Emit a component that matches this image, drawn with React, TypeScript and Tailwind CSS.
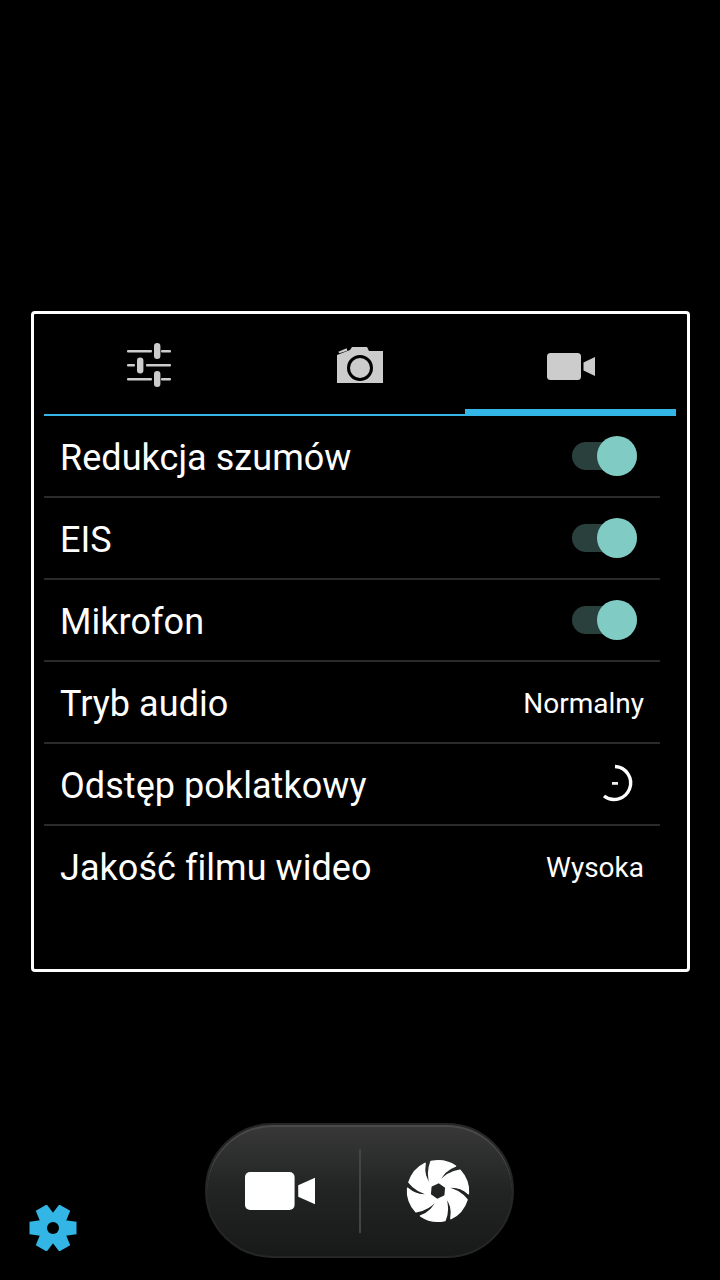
const font = { fontFamily: "Roboto, sans-serif" };

function Sliders() {
  return (
    <svg width="46" height="46" viewBox="0 0 46 46" className="text-[#cccccc]">
      <g fill="currentColor">
        <rect x="1" y="8" width="25" height="2.4" rx="1" />
        <rect x="35" y="8" width="10" height="2.4" rx="1" />
        <rect x="28" y="1" width="6.4" height="16" rx="3.2" />
        <rect x="1" y="22" width="8" height="2.4" rx="1" />
        <rect x="20" y="22" width="25" height="2.4" rx="1" />
        <rect x="11" y="15.5" width="6.4" height="16" rx="3.2" />
        <rect x="1" y="36" width="25" height="2.4" rx="1" />
        <rect x="35" y="36" width="10" height="2.4" rx="1" />
        <rect x="28" y="29" width="6.4" height="16" rx="3.2" />
      </g>
    </svg>
  );
}

function Camera() {
  return (
    <svg width="48" height="38" viewBox="0 0 48 38">
      <path d="M2.3 5.7 L10.7 2.3 L11.3 4.7 L3.3 7.3 Z" fill="#cccccc" />
      <path d="M1 9 L14 4 L16 1 L31 1 L33 5 L47 5 L47 37 L1 37 Z" fill="#cccccc" />
      <circle cx="24" cy="22" r="11.5" fill="none" stroke="#000" strokeWidth="3" />
    </svg>
  );
}

function Video({ color, width, height }: { color: string; width: number; height: number }) {
  return (
    <svg width={width} height={height} viewBox="0 0 48 27" preserveAspectRatio="none">
      <rect x="0" y="0" width="34" height="27" rx="3.5" fill={color} />
      <path d="M48 4 L48 23 L36.5 17.5 L36.5 9.5 Z" fill={color} />
    </svg>
  );
}

function Toggle() {
  return (
    <div className="relative h-[28px] w-[65px] rounded-full bg-[#2a403d]">
      <div className="absolute right-0 top-[-6px] h-[40px] w-[40px] rounded-full bg-[#80cbc4]" />
    </div>
  );
}

function Spinner() {
  return (
    <svg width="36" height="40" viewBox="0 0 36 40">
      <path d="M15 2.5 A 16.5 16.5 0 1 1 4 32" fill="none" stroke="#ffffff" strokeWidth="3.4" />
      <rect x="12" y="18" width="6" height="2.8" fill="#eeeeee" />
    </svg>
  );
}

function Shutter() {
  const blade =
    "M-7 -29.5 C 2 -31.5 11 -29.5 17.5 -25 C 9 -22 3.5 -16 1.5 -9 L -7 -5 C -10 -13 -10 -22 -7 -29.5 Z";
  return (
    <svg width="66" height="66" viewBox="-33 -33 66 66">
      {[0, 60, 120, 180, 240, 300].map((a) => (
        <path
          key={a}
          d={blade}
          fill="#ffffff"
          stroke="#ffffff"
          strokeWidth="1.5"
          strokeLinejoin="round"
          transform={`rotate(${a})`}
        />
      ))}
    </svg>
  );
}

function Gear() {
  return (
    <svg width="48" height="46" viewBox="-24 -23 48 46">
      <circle r="14" fill="#33b5e5" />
      {[0, 60, 120, 180, 240, 300].map((a) => (
        <path key={a} d="M-8 -11 L-6.3 -23.5 L6.3 -23.5 L8 -11 Z" fill="#33b5e5" transform={`rotate(${a + 30})`} />
      ))}
      <circle r="6" fill="#000000" />
    </svg>
  );
}

function Row({ label, children, last }: { label: string; children?: React.ReactNode; last?: boolean }) {
  return (
    <div
      className={`flex h-[82px] items-center justify-between border-b-2 pl-[16px] ${
        last ? "border-transparent" : "border-[#2a2a2a]"
      }`}
    >
      <span className="pt-[3px] text-[36px] leading-none tracking-[0.05px] text-white">{label}</span>
      {children}
    </div>
  );
}

function Value({ text }: { text: string }) {
  return <span className="pr-[16px] pt-[3px] text-[28px] leading-none text-white">{text}</span>;
}

export default function App() {
  return (
    <div className="relative flex h-[1280px] w-[720px] flex-col overflow-hidden bg-black" style={font}>
      <div className="ml-[31px] mt-[311px] h-[661px] w-[659px] rounded-[4px] border-[3px] border-white px-[10px]">
        <div className="flex h-[102px] w-[632px] border-b-2 border-[#33b5e5]">
          <div className="flex w-[211px] items-center justify-center pr-[1px] pt-[1px]">
            <Sliders />
          </div>
          <div className="flex w-[210px] items-center justify-center pt-[1px]">
            <Camera />
          </div>
          <div className="mb-[-2px] flex w-[211px] items-center justify-center border-b-[7px] border-[#33b5e5] pt-[10px]">
            <Video color="#cccccc" width={48} height={27} />
          </div>
        </div>
        <div className="w-[616px]">
          <Row label="Redukcja szumów">
            <div className="pr-[23px]">
              <Toggle />
            </div>
          </Row>
          <Row label="EIS">
            <div className="pr-[23px]">
              <Toggle />
            </div>
          </Row>
          <Row label="Mikrofon">
            <div className="pr-[23px]">
              <Toggle />
            </div>
          </Row>
          <Row label="Tryb audio">
            <Value text="Normalny" />
          </Row>
          <Row label="Odstęp poklatkowy">
            <div className="pr-[24px]">
              <Spinner />
            </div>
          </Row>
          <Row label="Jakość filmu wideo" last>
            <Value text="Wysoka" />
          </Row>
        </div>
      </div>
      <div className="ml-[205px] mt-[151px] flex h-[135px] w-[309px] items-center rounded-full border-2 border-[#262626] bg-gradient-to-b from-[#383838] via-[#222424] to-[#181a1a] shadow-[inset_0_2px_0_#4a4a4a]">
        <div className="flex w-[152px] justify-center pr-[6px]">
          <Video color="#ffffff" width={70} height={38} />
        </div>
        <div className="h-[84px] w-[2px] bg-[#444444]" />
        <div className="flex flex-1 justify-center pl-[3px]">
          <Shutter />
        </div>
      </div>
      <div className="absolute bottom-[29px] left-[29px]">
        <Gear />
      </div>
    </div>
  );
}
